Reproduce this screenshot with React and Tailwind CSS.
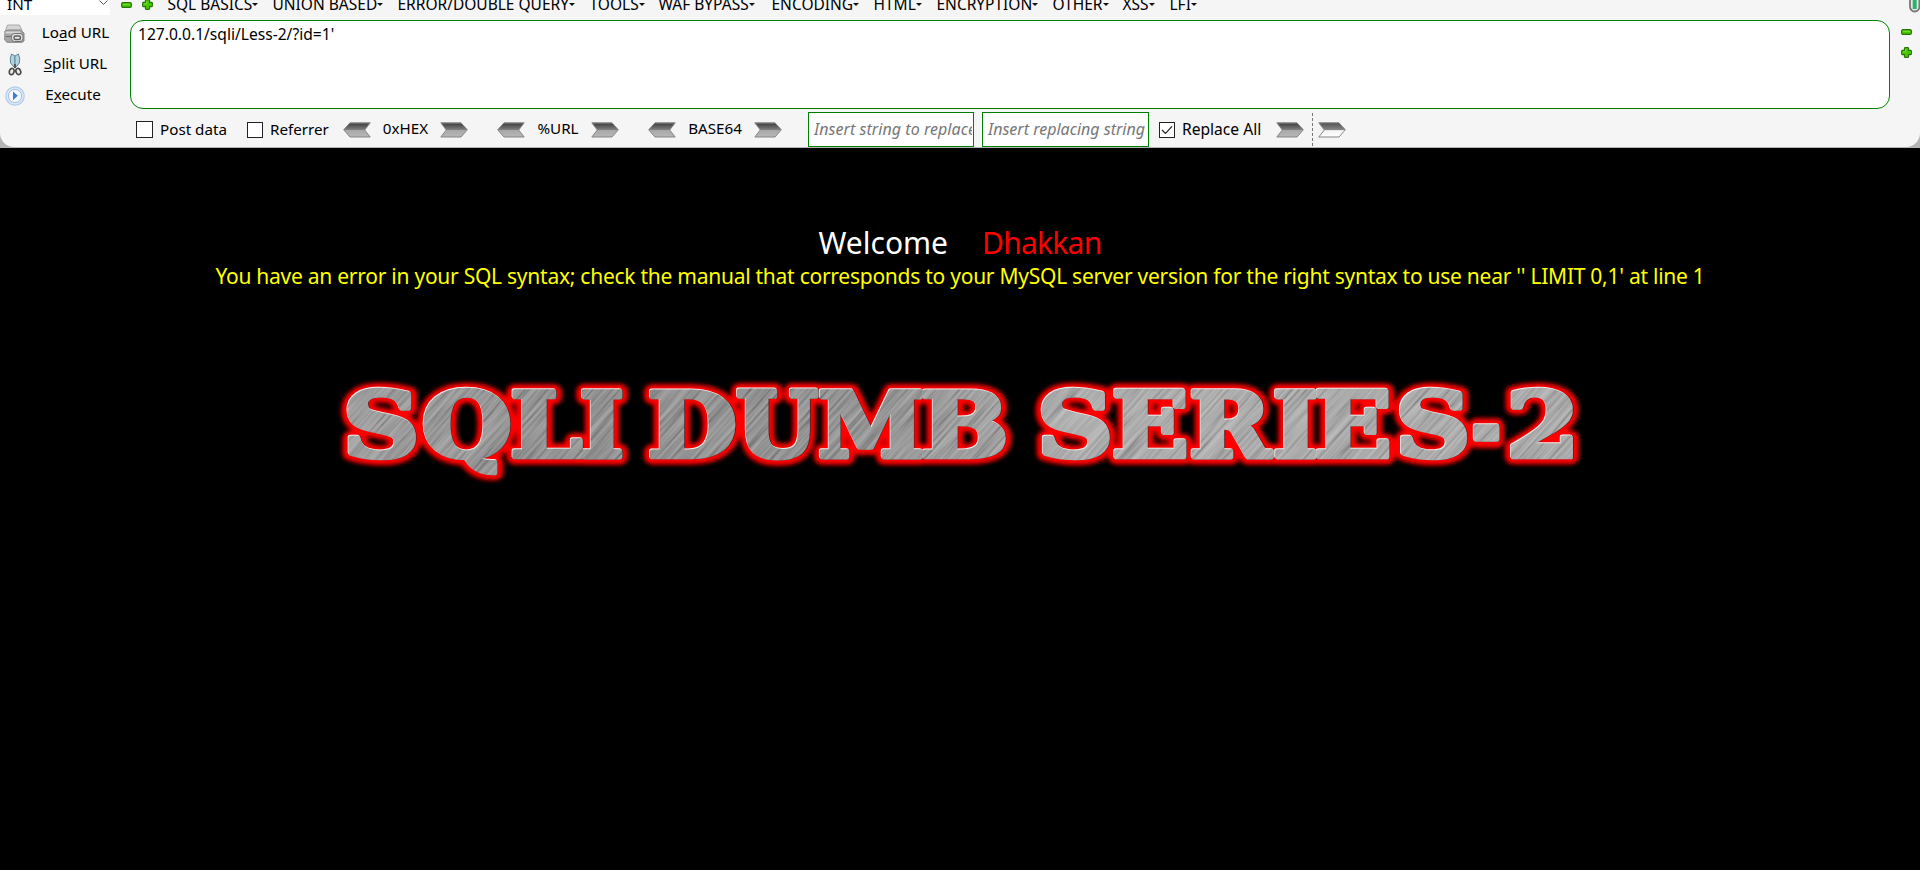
import React, { useMemo } from "react";

const MENUS = [
  ["SQL BASICS", "w-[105px]"],
  ["UNION BASED", "w-[125px]"],
  ["ERROR/DOUBLE QUERY", "w-[192px]"],
  ["TOOLS", "w-[69px]"],
  ["WAF BYPASS", "w-[113px]"],
  ["ENCODING", "w-[102px]"],
  ["HTML", "w-[63px]"],
  ["ENCRYPTION", "w-[116px]"],
  ["OTHER", "w-[70px]"],
  ["XSS", "w-[47px]"],
  ["LFI", "w-[38px]"],
];

function Caret() {
  return (
    <svg width="6" height="3" viewBox="0 0 6 3" className="mt-[3px] shrink-0">
      <path d="M0 0h6L3 3z" fill="#111" />
    </svg>
  );
}

function Minus() {
  return (
    <svg width="11" height="6" viewBox="0 0 11 6" className="block shrink-0">
      <rect x=".6" y=".6" width="9.8" height="4.8" rx="1.4" fill="#49c400" stroke="#28730a" strokeWidth="1.1" />
      <path d="M2 2.3h7" stroke="#7be33c" />
    </svg>
  );
}

function Plus() {
  return (
    <svg width="11" height="11" viewBox="0 0 11 11" className="block shrink-0">
      <path
        d="M4 .6h3l.6.6v2.2h2.2l.6.6v3l-.6.6H7.600v2.200l-.6.6H4l-.6-.6V7.600H1.200l-.6-.6V4l.6-.6h2.200V1.200z"
        fill="#49c400"
        stroke="#28730a"
        strokeWidth="1.100"
      />
      <path d="M2 4.800h2.800V2" stroke="#7be33c" fill="none" />
    </svg>
  );
}

function Arrow({ flip, light }) {
  return (
    <svg
      width="28"
      height="16"
      viewBox="0 0 28 16"
      className={flip ? "block shrink-0 -scale-x-100" : "block shrink-0"}
    >
      <defs>
        <linearGradient id="dark-arrow" x2="0" y2="1">
          <stop offset="0" stopColor="#707070" />
          <stop offset=".1" stopColor="#484848" />
          <stop offset=".5" stopColor="#808080" />
          <stop offset=".52" stopColor="#a8a8a8" />
          <stop offset="1" stopColor="#b8b8b8" />
        </linearGradient>
        <linearGradient id="light-arrow" x2="0" y2="1">
          <stop offset="0" stopColor="#505050" />
          <stop offset=".48" stopColor="#858585" />
          <stop offset=".55" stopColor="#f4f4f4" />
          <stop offset="1" stopColor="#fff" />
        </linearGradient>
      </defs>
      <path
        d="M.8 .8H21l6.300 7-6.300 7.200H.8L6.300 8z"
        fill={light ? "url(#light-arrow)" : "url(#dark-arrow)"}
        stroke="#858585"
        strokeWidth="1"
      />
    </svg>
  );
}

function Check({ checked, small }) {
  return (
    <span
      className={
        small
          ? "flex size-4 shrink-0 items-center justify-center border border-[#222] bg-white"
          : "flex size-[17px] shrink-0 items-center justify-center border border-[#222] bg-white"
      }
    >
      {checked && (
        <svg width="12" height="10" viewBox="0 0 12 10">
          <path d="M1 5l3.500 3.500L11 1.300" fill="none" stroke="#222" strokeWidth="1.200" />
        </svg>
      )}
    </span>
  );
}

function DiskIcon() {
  return (
    <svg width="21" height="19" viewBox="0 0 21 19">
      <path d="M3.500 1h12l2.500 5.500L1 8z" fill="#d4d4d4" stroke="#a9a9a9" />
      <path d="M1 7l3-1h12.500l3.500 3v8l-2 1.300H3L.7 16z" fill="#a6a6a6" stroke="#858585" />
      <path d="M1.500 7.500h15v2h-15z" fill="#d6d6d6" />
      <path d="M2 12.500h6" stroke="#6f6f6f" />
      <rect x="7.500" y="9.500" width="11.500" height="8" rx="3" fill="#e4e4e4" stroke="#707070" />
      <rect x="10" y="12" width="6.500" height="3.500" rx="1.500" fill="none" stroke="#5b5b5b" strokeWidth="1.400" />
    </svg>
  );
}

function ScissorsIcon() {
  return (
    <svg width="14" height="23" viewBox="0 0 14 23">
      <path d="M3.600 1Q1.500 5 2.600 10l3.300 4 1.100-1.500V3z" fill="#b5d2de" stroke="#5f8798" />
      <path d="M10.400 1Q12.500 5 11.400 10l-3.300 4L7 12.500V3z" fill="#b5d2de" stroke="#5f8798" />
      <path d="M7 11v4" stroke="#555" strokeWidth="2" />
      <ellipse cx="3.700" cy="18.500" rx="2.300" ry="3.200" transform="rotate(18 3.700 18.500)" fill="#eee" stroke="#4a4a4a" strokeWidth="1.700" />
      <ellipse cx="10.300" cy="18.500" rx="2.300" ry="3.200" transform="rotate(-18 10.300 18.500)" fill="#eee" stroke="#4a4a4a" strokeWidth="1.700" />
    </svg>
  );
}

function PlayIcon() {
  return (
    <svg width="20" height="20" viewBox="0 0 20 20">
      <circle cx="10" cy="10" r="9.200" fill="#dce9f8" stroke="#b4cdec" strokeWidth="1.300" />
      <circle cx="10" cy="10" r="6.600" fill="#f3f8fd" stroke="#a3c0e4" />
      <path d="M8 5.500l4.800 4.300L8 14.300z" fill="#3c7fd0" />
    </svg>
  );
}

function SideButton({ icon, narrow, children }) {
  return (
    <div className="flex h-[31px] items-center">
      <span className="flex w-[29px] justify-center">{icon}</span>
      <span className={narrow ? "w-[88px] pb-[3px] text-center" : "w-[93px] pb-[3px] text-center"}>{children}</span>
    </div>
  );
}

const LOGO_SIZE = 89;
const LOGO_STROKE = 5;

// [glyph, left edge, right edge] of every letter of the banner
const LOGO_WORDS = [
  [["S", 346.5, 416], ["Q", 422.7, 510.5], ["L", 512.3, 583], ["I", 581.7, 622.7]],
  [["D", 650, 736], ["U", 737, 819], ["M", 819, 923.5], ["B", 923, 1006.5]],
  [["S", 1040.7, 1109.7], ["E", 1114, 1187], ["R", 1191.5, 1274.5], ["I", 1275, 1317], ["E", 1316.5, 1390], ["S", 1399, 1467], ["-", 1472.7, 1500.5], ["2", 1510, 1573]],
];

function fitLetters() {
  const ctx = document.createElement("canvas").getContext("2d");
  ctx.font = `bold ${LOGO_SIZE}px "DejaVu Serif"`;
  return LOGO_WORDS.map((word) =>
    word.map(([char, left, right]) => {
      const m = ctx.measureText(char);
      const ink = m.actualBoundingBoxRight + m.actualBoundingBoxLeft;
      const scale = (right - left - LOGO_STROKE) / ink;
      return { char, scale, x: left + LOGO_STROKE / 2 + m.actualBoundingBoxLeft * scale };
    }),
  );
}

function Logo() {
  const words = useMemo(fitLetters, []);
  const letters = (props) =>
    words.map((word, w) => (
      <g key={w}>
        {word.map(({ char, scale, x }, i) => (
          <text key={i} transform={`translate(${x} 456.5) scale(${scale} 1)`} vectorEffect="non-scaling-stroke" {...props}>
            {char}
          </text>
        ))}
      </g>
    ));
  return (
    <svg
      width="1280"
      height="130"
      viewBox="320 360 1280 130"
      className="font-['DejaVu_Serif'] text-[89px] font-bold"
      strokeLinejoin="round"
    >
      <defs>
        <filter id="glow" x="-5%" y="-30%" width="110%" height="160%">
          <feGaussianBlur stdDeviation="2.200" />
        </filter>
        <filter id="brushed" x="0" y="0" width="100%" height="100%">
          <feTurbulence type="fractalNoise" baseFrequency=".012 .4" numOctaves="3" seed="4" />
          <feColorMatrix values="1 0 0 0 -.14  1 0 0 0 -.14  1 0 0 0 -.14  0 0 0 0 1" />
        </filter>
        <linearGradient id="metal">
          <stop offset="0" stopColor="#939393" />
          <stop offset=".22" stopColor="#848484" />
          <stop offset=".42" stopColor="#868686" />
          <stop offset=".6" stopColor="#a2a2a2" />
          <stop offset="1" stopColor="#9e9e9e" />
        </linearGradient>
        <mask id="letters" maskUnits="userSpaceOnUse" x="320" y="360" width="1280" height="130">
          {letters({ fill: "#fff", stroke: "#fff", strokeWidth: LOGO_STROKE })}
        </mask>
      </defs>
      <g filter="url(#glow)" aria-hidden="true">
        {letters({ fill: "#f00", stroke: "#f00", strokeWidth: 16 })}
      </g>
      <g transform="translate(.8 .8)" aria-hidden="true">
        {letters({ fill: "#5b1f1f", stroke: "#5b1f1f", strokeWidth: LOGO_STROKE })}
      </g>
      <g transform="translate(-.8 -.8)" aria-hidden="true">
        {letters({ fill: "#eee", stroke: "#eee", strokeWidth: LOGO_STROKE })}
      </g>
      <g mask="url(#letters)">
        <rect x="320" y="360" width="1280" height="130" fill="url(#metal)" />
        <g className="mix-blend-soft-light">
          <rect x="200" y="-300" width="1500" height="1500" transform="rotate(-48 960 425)" filter="url(#brushed)" />
        </g>
      </g>
    </svg>
  );
}

export default function App() {
  return (
    <div className="h-[870px] w-[1920px] overflow-hidden bg-black font-['Noto_Sans',sans-serif] text-[15.2px] leading-5 text-black">
      <div className="h-[148px] bg-[#b4b4b4]">
        <header className="flex h-[147px] overflow-hidden rounded-b-[14px] bg-[#f5f5f5]">
          <aside className="w-[130px] shrink-0">
            <div className="flex h-[15px] w-[110px] items-end justify-between overflow-hidden bg-white pr-[2px] pl-[7px]">
              <span className="pb-px">INT</span>
              <svg width="9" height="15" viewBox="0 0 9 15">
                <path d="M.5 .5l4 4 4-4" fill="none" stroke="#555" />
              </svg>
            </div>
            <div className="mt-[3px]">
              <SideButton icon={<DiskIcon />}>
                Lo<u className="underline-offset-2">a</u>d URL
              </SideButton>
              <SideButton icon={<ScissorsIcon />}>
                <u className="underline-offset-2">S</u>plit URL
              </SideButton>
              <SideButton icon={<PlayIcon />} narrow>
                E<u className="underline-offset-2">x</u>ecute
              </SideButton>
            </div>
          </aside>

          <main className="flex w-[1760px] shrink-0 flex-col">
            <nav className="flex h-5 items-start">
              <div className="flex w-[37.5px] shrink-0 items-start">
                <span className="-ml-[9px] pt-[2px]"><Minus /></span>
                <span className="-mt-[1px] ml-[10px]"><Plus /></span>
              </div>
              {MENUS.map(([label, width]) => (
                <div key={label} className={`flex shrink-0 whitespace-nowrap text-[15.5px] ${width}`}>
                  <span className="-mt-[6px]">{label}</span>
                  <Caret />
                </div>
              ))}
            </nav>
            <div className="h-[89px] rounded-[13px] border border-[#008000] bg-white px-[7px] pt-[3px] text-[15.6px]">
              127.0.0.1/sqli/Less-2/?id=1'
            </div>
            <div className="mt-[3px] flex h-[35px] items-center whitespace-nowrap pl-[6px]">
              <div className="flex w-[111px] shrink-0 items-center gap-[7px]"><Check /><span className="pb-[2px]">Post data</span></div>
              <div className="flex w-[96px] shrink-0 items-center gap-[7px]"><Check small /><span className="pb-[2px]">Referrer</span></div>
              <div className="flex w-[154px] shrink-0 items-center">
                <Arrow flip /><span className="w-[69px] pb-[3px] text-center">0xHEX</span><Arrow />
              </div>
              <div className="flex w-[151px] shrink-0 items-center">
                <Arrow flip /><span className="w-[66px] pb-[3px] text-center">%URL</span><Arrow />
              </div>
              <div className="flex w-[160px] shrink-0 items-center">
                <Arrow flip /><span className="w-[78px] pb-[3px] text-center">BASE64</span><Arrow />
              </div>
              <div className="flex h-[35px] w-[166px] shrink-0 items-center border border-[#008000] bg-white pr-px pl-[5px]">
                <span className="w-full overflow-hidden pb-px text-[16px] tracking-[0.05px] text-[#777] italic">Insert string to replace</span>
              </div>
              <div className="ml-2 flex h-[35px] w-[167px] shrink-0 items-center border border-[#008000] bg-white pl-[5px]">
                <span className="pb-px text-[16px] text-[#777] italic">Insert replacing string</span>
              </div>
              <div className="ml-[10px] flex w-[117px] shrink-0 items-center gap-[7px]">
                <Check small checked /><span className="pb-[2px] text-[15.6px]">Replace All</span>
              </div>
              <Arrow />
              <span className="ml-2 h-[33px] border-l border-dashed border-[#777]" />
              <span className="ml-[5px]"><Arrow light /></span>
            </div>
          </main>

          <aside className="flex w-[30px] shrink-0 flex-col pl-[11px]">
            <div className="flex h-[29px] justify-end">
              <svg width="11" height="13" viewBox="0 0 11 13">
                <path d="M1 0v6.500a4.700 5 0 0 0 9.400 0V0" fill="#e8e8e8" stroke="#777" strokeWidth="1.800" />
                <path d="M3.700 0h4v9h-4z" fill="#27b46b" />
              </svg>
            </div>
            <Minus />
            <span className="mt-3"><Plus /></span>
          </aside>
        </header>
      </div>

      <section className="flex flex-col items-center whitespace-nowrap">
        <h1 className="mt-[74px] flex h-[41px] gap-[34px] text-[30px] leading-[42px]">
          <span className="text-white">Welcome</span>
          <span className="tracking-[-0.75px] text-[#f00]">Dhakkan</span>
        </h1>
        <p className="-mt-px h-[29px] text-[21px] leading-7 tracking-[-0.255px] text-[#ff0]">
          You have an error in your SQL syntax; check the manual that corresponds to your MySQL server version for the right syntax to use near '' LIMIT 0,1' at line 1
        </p>
        <div className="mt-[69px]"><Logo /></div>
      </section>
    </div>
  );
}
